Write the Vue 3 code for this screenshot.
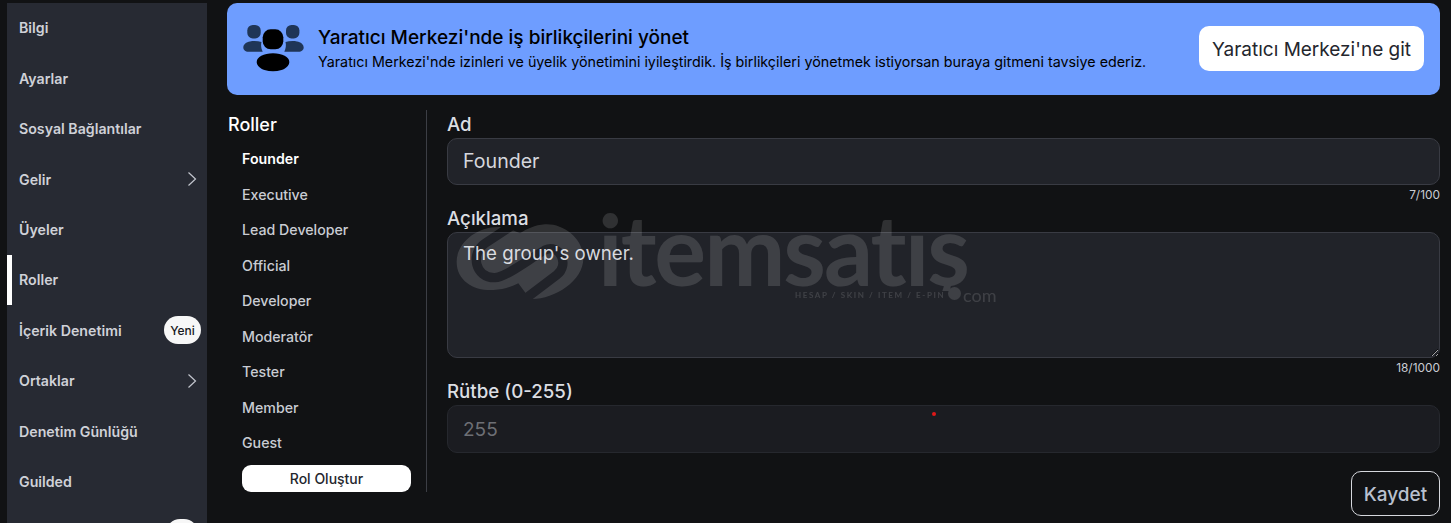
<script setup>
const navItems = [
  { label: 'Bilgi' },
  { label: 'Ayarlar' },
  { label: 'Sosyal Bağlantılar' },
  { label: 'Gelir', arrow: true },
  { label: 'Üyeler' },
  { label: 'Roller', active: true },
  { label: 'İçerik Denetimi', badge: 'Yeni' },
  { label: 'Ortaklar', arrow: true },
  { label: 'Denetim Günlüğü' },
  { label: 'Guilded' }
]
const roles = ['Founder', 'Executive', 'Lead Developer', 'Official', 'Developer', 'Moderatör', 'Tester', 'Member', 'Guest']
</script>

<template>
  <div class="page">
    <nav class="sidebar">
      <div v-for="item in navItems" :key="item.label" class="nav-item" :class="{ active: item.active }">
        <span>{{ item.label }}</span>
        <svg v-if="item.arrow" class="chev" width="10" height="16" viewBox="0 0 10 16" fill="none">
          <path d="M1.500 1.500 8.500 8l-7 6.500" stroke="#c3c6ce" stroke-width="1.200" />
        </svg>
        <span v-if="item.badge" class="badge">{{ item.badge }}</span>
      </div>
      <div class="nav-item last"><span class="badge cut"></span></div>
    </nav>

    <main class="main">
      <section class="banner">
        <svg class="people" width="64" height="56" viewBox="0 0 64 56">
          <g fill="#1f3557">
            <rect x="5.300" y="4" width="13.400" height="13.400" rx="5.500" />
            <path d="M8 20.400c4-.6 8-.4 11.500.7-.8 3-.4 6.300 1.200 9.600H6.500c-3.200 0-5.200-2-5.200-4.300 0-3 3-5.500 6.700-6Z" />
            <rect x="44" y="4" width="13.400" height="13.400" rx="5.500" />
            <path d="M55 20.400c-4-.6-8-.4-11.500.7.800 3 .4 6.300-1.200 9.600h14.200c3.200 0 5.200-2 5.200-4.300 0-3-3-5.500-6.700-6Z" />
          </g>
          <g fill="#000">
            <rect x="20.700" y="8.300" width="20.600" height="20" rx="8" />
            <path d="M14.700 41c0-5.200 7-8.700 16.300-8.700S47.300 35.800 47.300 41c0 3.700-3.500 6.500-7.800 8-5.500 1.800-11.500 1.800-17 0-4.300-1.500-7.800-4.300-7.800-8Z" />
          </g>
        </svg>
        <div class="banner-text">
          <h2>Yaratıcı Merkezi'nde iş birlikçilerini yönet</h2>
          <p>Yaratıcı Merkezi'nde izinleri ve üyelik yönetimini iyileştirdik. İş birlikçileri yönetmek istiyorsan buraya gitmeni tavsiye ederiz.</p>
        </div>
        <button class="banner-btn">Yaratıcı Merkezi'ne git</button>
      </section>

      <section class="content">
        <aside class="roles">
          <h3>Roller</h3>
          <div v-for="(role, i) in roles" :key="role" class="role" :class="{ selected: i === 0 }">{{ role }}</div>
          <button class="create">Rol Oluştur</button>
        </aside>

        <form class="form" @submit.prevent>
          <label>Ad</label>
          <input class="field big" value="Founder" readonly />
          <div class="count">7/100</div>
          <label>Açıklama</label>
          <textarea class="field area" readonly>The group's owner.</textarea>
          <div class="count">18/1000</div>
          <label>Rütbe (0-255)</label>
          <input class="field off" value="255" disabled />
          <div class="actions"><button class="save">Kaydet</button></div>
        </form>
      </section>
    </main>

    <div class="watermark">
      <svg class="wm-logo" width="140" height="95" viewBox="0 0 420 285" fill="none">
        <mask id="wm-cut" maskUnits="userSpaceOnUse" x="0" y="0" width="420" height="285">
          <path fill="#fff" d="M170 38C90 25 20 80 20 140c0 60 55 88 110 85 30-1 55-10 75-20l35 47c70 3 160-52 160-122 0-60-60-105-115-102-30 2-55 14-75 27Z" />
          <path fill="none" stroke="#000" stroke-width="28" d="M195 26 105 85C60 115 75 190 135 188c35-2 105-58 150-83 45-20 75 45 35 75l-95 72" />
        </mask>
        <rect width="420" height="285" fill="#fff" mask="url(#wm-cut)" />
      </svg>
      <span class="wm-name">itemsatış</span>
      <span class="wm-sub">HESAP / SKIN / ITEM / E-PIN</span>
      <span class="wm-dot"></span>
      <span class="wm-com">com</span>
    </div>
    <span class="red-dot"></span>
  </div>
</template>

<style>
html, body { margin: 0; background: #111214; overflow: hidden; }
</style>

<style scoped>
* { box-sizing: border-box; }
.page {
  position: relative;
  display: flex;
  gap: 20px;
  height: 523px;
  padding: 3px 11px 0 7px;
  overflow: hidden;
  background: #111214;
  color: #d5d7dd;
  font-family: Inter, "Noto Sans", sans-serif;
}
.sidebar { flex: 0 0 200px; height: 580px; background: #272a33; }
.nav-item {
  position: relative;
  display: flex;
  align-items: center;
  justify-content: space-between;
  height: 50.400px;
  padding: 0 6px 0.5px 12px;
  font-size: 14.200px;
  font-weight: 600;
  color: #cfd1d8;
}
.nav-item.last { justify-content: flex-end; }
.nav-item.active { box-shadow: inset 5px 0 0 #fff; }
.chev { margin-right: 4px; }
.badge {
  display: flex;
  align-items: center;
  justify-content: center;
  width: 37px;
  height: 28px;
  border-radius: 14px;
  background: #f7f7f7;
  color: #17181c;
  font-size: 12px;
  font-weight: 500;
}
.badge.cut { margin: 2px 3px 0 0; width: 32px; }
.main { flex: 1; min-width: 0; display: flex; flex-direction: column; }
.banner {
  display: flex;
  align-items: center;
  height: 92px;
  padding: 0 16px 0 15px;
  border-radius: 10px;
  background: #6e9dff;
  color: #000;
}
.people { flex: none; overflow: visible; }
.banner-text { flex: 1; margin-left: 12px; padding-bottom: 1px; }
.banner-text h2 { margin: 0; font-size: 19px; line-height: 24px; font-weight: 500; }
.banner-text p { margin: 3px 0 0; font-size: 14.300px; line-height: 18px; font-weight: 400; }
.banner-btn {
  width: 225px;
  height: 45px;
  margin-bottom: 2px;
  padding: 2px 0 0;
  border: 0;
  border-radius: 10px;
  background: #fff;
  color: #24262d;
  font: 400 19px Inter, sans-serif;
}
.content { display: flex; margin-top: 15px; }
.roles {
  flex: 0 0 200px;
  height: 382px;
  padding-right: 15px;
  border-right: 1px solid #3c3e45;
}
.roles h3 { margin: 3px 0 4px 1px; height: 24px; font-size: 18px; line-height: 24px; font-weight: 500; color: #fff; }
.role {
  height: 35.500px;
  margin-left: 15px;
  font-size: 14.200px;
  font-weight: 500;
  line-height: 35.500px;
  color: #c9ccd3;
}
.role.selected { color: #fff; font-weight: 600; }
.create {
  display: block;
  width: 169px;
  height: 27px;
  margin: 4px 0 0 15px;
  padding: 0;
  border: 0;
  border-radius: 9px;
  background: #fff;
  color: #24262d;
  font: 500 14px Inter, sans-serif;
}
.form { flex: 1; min-width: 0; margin-left: 20px; }
label { display: block; height: 28px; padding: 4px 0 0; font-size: 18.700px; line-height: 22px; font-weight: 500; color: #dcdee3; }
.field {
  display: block;
  width: 100%;
  height: 47px;
  padding: 0 15px;
  border: 1px solid #393b43;
  border-radius: 10px;
  outline: 0;
  background: #212329;
  color: #d5d7dd;
  font: 400 18.700px Inter, sans-serif;
}
.field.big { padding-bottom: 2px; font-size: 19.600px; }
.area { height: 126px; padding: 9px 15px; resize: vertical; line-height: 24px; }
.off { height: 48px; background: #1b1c21; border-color: #26282e; color: #6d6f75; font-size: 19px; }
.count { height: 19px; padding-top: 2px; text-align: right; font-size: 11.900px; line-height: 15px; color: #c9ccd3; }
.actions { display: flex; justify-content: flex-end; margin-top: 18px; }
.save {
  width: 89px;
  height: 45px;
  padding: 2px 0 0;
  border: 1px solid #d5d7dd;
  border-radius: 10px;
  background: transparent;
  color: #b9c0cf;
  font: 500 19px Inter, sans-serif;
}
.watermark { position: absolute; inset: 0; pointer-events: none; color: #fff; opacity: .13; }
.wm-logo { position: absolute; left: 450px; top: 215px; }
.wm-name {
  position: absolute;
  left: 598px;
  top: 206px;
  clip-path: inset(-10px 0 0 0);
  font: 700 97px/85px Lato, sans-serif;
  letter-spacing: -2px;
}
.wm-sub {
  position: absolute;
  left: 795px;
  top: 291px;
  font: 700 8px/9px Lato, sans-serif;
  letter-spacing: 1.600px;
  white-space: nowrap;
}
.wm-dot { position: absolute; left: 948px; top: 287px; width: 13px; height: 13px; border-radius: 50%; background: #fff; }
.wm-com { position: absolute; left: 963px; top: 291px; font: 400 18px/9px Lato, sans-serif; }
.red-dot { position: absolute; left: 932px; top: 412px; width: 4px; height: 4px; border-radius: 50%; background: #e01818; }
</style>
